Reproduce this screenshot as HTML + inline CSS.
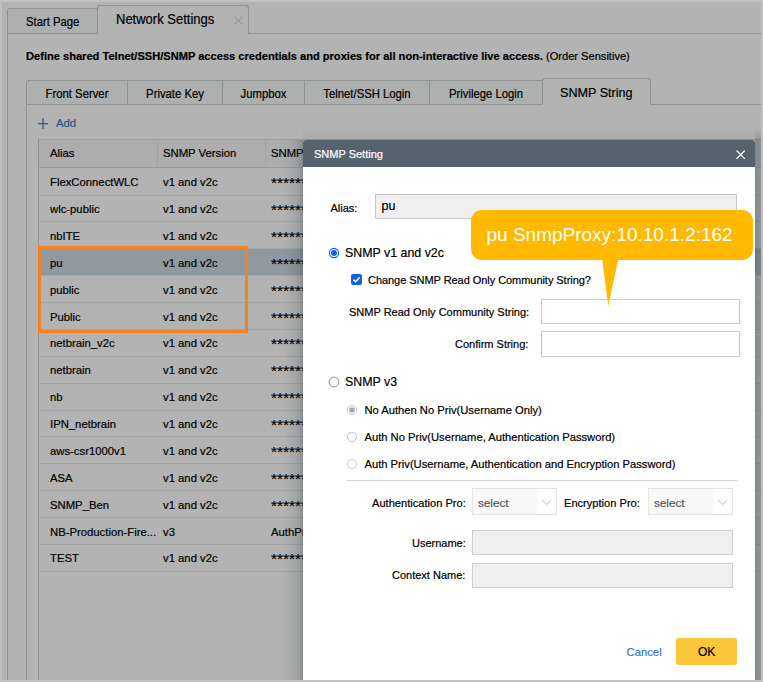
<!DOCTYPE html>
<html><head><meta charset="utf-8">
<style>
*{margin:0;padding:0;box-sizing:border-box}
html,body{width:763px;height:682px;overflow:hidden;background:#c1c1c1;font-family:"Liberation Sans",sans-serif;color:#000}
.a{position:absolute}
.t{position:absolute;white-space:nowrap;line-height:1;-webkit-text-stroke:0.2px currentColor}
.vl{position:absolute;width:1px;background:#8e9092}
.hl{position:absolute;height:1px;background:#8e9092}
</style></head>
<body>
<div class="a" style="left:2px;top:2px;width:759px;height:678px;background:#b3b3b3;overflow:hidden">
<div class="a" style="left:-2px;top:-2px;width:763px;height:682px">
<div class="a" style="left:7px;top:8px;width:91px;height:26px;background:#aeb0b0;border:1px solid #8e9092;border-bottom:none;border-radius:3px 0 0 0"></div>
<div class="t" style="left:26px;top:16.93px;font-size:11.3px;;transform:scaleY(1.12);transform-origin:0 9.57px">Start Page</div>
<div class="a" style="left:97px;top:5px;width:152px;height:29px;background:#b3b3b3;border:1px solid #8e9092;border-bottom:none;border-radius:3px 3px 0 0"></div>
<div class="t" style="left:116px;top:12.60px;font-size:13px;;transform:scaleY(1.08);transform-origin:0 11.00px">Network Settings</div>
<svg class="a" style="left:233px;top:15px" width="11" height="11" viewBox="0 0 11 11"><path d="M1.5 1.5L9.5 9.5M9.5 1.5L1.5 9.5" stroke="#9a9a9a" stroke-width="1.15"/></svg>
<div class="hl" style="left:7px;top:33px;width:91px"></div>
<div class="hl" style="left:248px;top:33px;width:513px"></div>
<div class="vl" style="left:7px;top:33px;height:647px"></div>
<div class="t" style="left:26px;top:50.60px;font-size:11.1px;"><b>Define shared Telnet/SSH/SNMP access credentials and proxies for all non-interactive live access.</b> (Order Sensitive)</div>
<div class="a" style="left:26px;top:80px;width:102px;height:25px;background:#aeb0b0;border:1px solid #8e9092;border-bottom:none;border-radius:3px 0 0 0;"></div>
<div class="t" style="left:26px;width:102px;text-align:center;top:88.93px;font-size:11.3px;transform:scaleY(1.12);transform-origin:0 9.57px">Front Server</div>
<div class="a" style="left:127px;top:80px;width:96px;height:25px;background:#aeb0b0;border:1px solid #8e9092;border-bottom:none;"></div>
<div class="t" style="left:127px;width:96px;text-align:center;top:88.93px;font-size:11.3px;transform:scaleY(1.12);transform-origin:0 9.57px">Private Key</div>
<div class="a" style="left:222px;top:80px;width:83px;height:25px;background:#aeb0b0;border:1px solid #8e9092;border-bottom:none;"></div>
<div class="t" style="left:222px;width:83px;text-align:center;top:88.93px;font-size:11.3px;transform:scaleY(1.12);transform-origin:0 9.57px">Jumpbox</div>
<div class="a" style="left:304px;top:80px;width:126px;height:25px;background:#aeb0b0;border:1px solid #8e9092;border-bottom:none;"></div>
<div class="t" style="left:304px;width:126px;text-align:center;top:88.93px;font-size:11.3px;transform:scaleY(1.12);transform-origin:0 9.57px">Telnet/SSH Login</div>
<div class="a" style="left:429px;top:80px;width:114px;height:25px;background:#aeb0b0;border:1px solid #8e9092;border-bottom:none;"></div>
<div class="t" style="left:429px;width:114px;text-align:center;top:88.93px;font-size:11.3px;transform:scaleY(1.12);transform-origin:0 9.57px">Privilege Login</div>
<div class="a" style="left:542px;top:78px;width:109px;height:27px;background:#b3b3b3;border:1px solid #8e9092;border-bottom:none;border-radius:3px 3px 0 0"></div>
<div class="t" style="left:560px;top:87.33px;font-size:12.6px;;transform:scaleY(1.08);transform-origin:0 10.67px">SNMP String</div>
<div class="hl" style="left:26px;top:104px;width:516px"></div>
<div class="hl" style="left:650px;top:104px;width:111px"></div>
<div class="vl" style="left:26px;top:104px;height:576px"></div>
<svg class="a" style="left:37px;top:117px" width="12" height="13" viewBox="0 0 12 13"><path d="M6 1V12M1 6.5H11" stroke="#25587c" stroke-width="1.25"/></svg>
<div class="t" style="left:56px;top:118.43px;font-size:11.3px;color:#25587c">Add</div>
<div class="a" style="left:38px;top:139px;width:723px;height:29px;background:#adadad;border-top:1px solid #9a9b9c;border-bottom:1px solid #9a9b9c"></div>
<div class="vl" style="left:157px;top:140px;height:27px;background:#a2a3a4"></div>
<div class="vl" style="left:265px;top:140px;height:27px;background:#a2a3a4"></div>
<div class="t" style="left:50px;top:148.43px;font-size:11.3px;">Alias</div>
<div class="t" style="left:163px;top:148.43px;font-size:11.3px;">SNMP Version</div>
<div class="t" style="left:271px;top:148.43px;font-size:11.3px;">SNMP</div>
<div class="a" style="left:39px;top:168px;width:722px;height:27px;"></div>
<div class="hl" style="left:39px;top:195px;width:722px;background:#a3a4a5"></div>
<div class="t" style="left:50px;top:176.53px;font-size:11.3px;">FlexConnectWLC</div>
<div class="t" style="left:163px;top:176.53px;font-size:11.3px;">v1 and v2c</div>
<div class="t" style="left:271px;top:175.26px;font-size:15.4px;">********</div>
<div class="a" style="left:39px;top:196px;width:722px;height:25px;"></div>
<div class="hl" style="left:39px;top:221px;width:722px;background:#a3a4a5"></div>
<div class="t" style="left:50px;top:203.53px;font-size:11.3px;">wlc-public</div>
<div class="t" style="left:163px;top:203.53px;font-size:11.3px;">v1 and v2c</div>
<div class="t" style="left:271px;top:202.26px;font-size:15.4px;">********</div>
<div class="a" style="left:39px;top:222px;width:722px;height:26px;"></div>
<div class="hl" style="left:39px;top:248px;width:722px;background:#a3a4a5"></div>
<div class="t" style="left:50px;top:230.53px;font-size:11.3px;">nbITE</div>
<div class="t" style="left:163px;top:230.53px;font-size:11.3px;">v1 and v2c</div>
<div class="t" style="left:271px;top:229.26px;font-size:15.4px;">********</div>
<div class="a" style="left:39px;top:249px;width:722px;height:26px;background:#8e9a9f;"></div>
<div class="hl" style="left:39px;top:275px;width:722px;background:#a3a4a5"></div>
<div class="t" style="left:50px;top:257.53px;font-size:11.3px;">pu</div>
<div class="t" style="left:163px;top:257.53px;font-size:11.3px;">v1 and v2c</div>
<div class="t" style="left:271px;top:256.26px;font-size:15.4px;">********</div>
<div class="a" style="left:39px;top:276px;width:722px;height:26px;"></div>
<div class="hl" style="left:39px;top:302px;width:722px;background:#a3a4a5"></div>
<div class="t" style="left:50px;top:284.53px;font-size:11.3px;">public</div>
<div class="t" style="left:163px;top:284.53px;font-size:11.3px;">v1 and v2c</div>
<div class="t" style="left:271px;top:283.26px;font-size:15.4px;">********</div>
<div class="a" style="left:39px;top:303px;width:722px;height:26px;"></div>
<div class="hl" style="left:39px;top:329px;width:722px;background:#a3a4a5"></div>
<div class="t" style="left:50px;top:311.53px;font-size:11.3px;">Public</div>
<div class="t" style="left:163px;top:311.53px;font-size:11.3px;">v1 and v2c</div>
<div class="t" style="left:271px;top:310.26px;font-size:15.4px;">********</div>
<div class="a" style="left:39px;top:330px;width:722px;height:26px;"></div>
<div class="hl" style="left:39px;top:356px;width:722px;background:#a3a4a5"></div>
<div class="t" style="left:50px;top:337.53px;font-size:11.3px;">netbrain_v2c</div>
<div class="t" style="left:163px;top:337.53px;font-size:11.3px;">v1 and v2c</div>
<div class="t" style="left:271px;top:336.26px;font-size:15.4px;">********</div>
<div class="a" style="left:39px;top:357px;width:722px;height:26px;"></div>
<div class="hl" style="left:39px;top:383px;width:722px;background:#a3a4a5"></div>
<div class="t" style="left:50px;top:364.53px;font-size:11.3px;">netbrain</div>
<div class="t" style="left:163px;top:364.53px;font-size:11.3px;">v1 and v2c</div>
<div class="t" style="left:271px;top:363.26px;font-size:15.4px;">********</div>
<div class="a" style="left:39px;top:384px;width:722px;height:26px;"></div>
<div class="hl" style="left:39px;top:410px;width:722px;background:#a3a4a5"></div>
<div class="t" style="left:50px;top:391.53px;font-size:11.3px;">nb</div>
<div class="t" style="left:163px;top:391.53px;font-size:11.3px;">v1 and v2c</div>
<div class="t" style="left:271px;top:390.26px;font-size:15.4px;">********</div>
<div class="a" style="left:39px;top:411px;width:722px;height:25px;"></div>
<div class="hl" style="left:39px;top:436px;width:722px;background:#a3a4a5"></div>
<div class="t" style="left:50px;top:418.53px;font-size:11.3px;">IPN_netbrain</div>
<div class="t" style="left:163px;top:418.53px;font-size:11.3px;">v1 and v2c</div>
<div class="t" style="left:271px;top:417.26px;font-size:15.4px;">********</div>
<div class="a" style="left:39px;top:437px;width:722px;height:26px;"></div>
<div class="hl" style="left:39px;top:463px;width:722px;background:#a3a4a5"></div>
<div class="t" style="left:50px;top:445.53px;font-size:11.3px;">aws-csr1000v1</div>
<div class="t" style="left:163px;top:445.53px;font-size:11.3px;">v1 and v2c</div>
<div class="t" style="left:271px;top:444.26px;font-size:15.4px;">********</div>
<div class="a" style="left:39px;top:464px;width:722px;height:26px;"></div>
<div class="hl" style="left:39px;top:490px;width:722px;background:#a3a4a5"></div>
<div class="t" style="left:50px;top:472.53px;font-size:11.3px;">ASA</div>
<div class="t" style="left:163px;top:472.53px;font-size:11.3px;">v1 and v2c</div>
<div class="t" style="left:271px;top:471.26px;font-size:15.4px;">********</div>
<div class="a" style="left:39px;top:491px;width:722px;height:26px;"></div>
<div class="hl" style="left:39px;top:517px;width:722px;background:#a3a4a5"></div>
<div class="t" style="left:50px;top:499.53px;font-size:11.3px;">SNMP_Ben</div>
<div class="t" style="left:163px;top:499.53px;font-size:11.3px;">v1 and v2c</div>
<div class="t" style="left:271px;top:498.26px;font-size:15.4px;">********</div>
<div class="a" style="left:39px;top:518px;width:722px;height:26px;"></div>
<div class="hl" style="left:39px;top:544px;width:722px;background:#a3a4a5"></div>
<div class="t" style="left:50px;top:526.53px;font-size:11.3px;">NB-Production-Fire...</div>
<div class="t" style="left:163px;top:526.53px;font-size:11.3px;">v3</div>
<div class="t" style="left:271px;top:526.53px;font-size:11.3px;">AuthPriv</div>
<div class="a" style="left:39px;top:545px;width:722px;height:26px;"></div>
<div class="hl" style="left:39px;top:571px;width:722px;background:#a3a4a5"></div>
<div class="t" style="left:50px;top:552.53px;font-size:11.3px;">TEST</div>
<div class="t" style="left:163px;top:552.53px;font-size:11.3px;">v1 and v2c</div>
<div class="t" style="left:271px;top:551.26px;font-size:15.4px;">********</div>
<div class="vl" style="left:38px;top:139px;height:541px"></div>
<div class="a" style="left:38px;top:246px;width:210px;height:87px;border:3px solid #f58220"></div>
<div class="a" style="left:278px;top:140px;width:25px;height:542px;background:linear-gradient(to left,rgba(20,35,45,0.33) 0px,rgba(20,35,45,0.235) 1px,rgba(20,35,45,0.18) 3px,rgba(20,35,45,0.12) 6px,rgba(20,35,45,0.087) 9px,rgba(20,35,45,0.06) 12px,rgba(20,35,45,0.04) 14px,rgba(20,35,45,0.012) 19px,rgba(20,35,45,0) 25px)"></div>
<div class="a" style="left:755px;top:140px;width:6px;height:542px;background:linear-gradient(to right,rgba(20,35,45,0.3) 0px,rgba(20,35,45,0.26) 2px,rgba(20,35,45,0.24) 4px,rgba(20,35,45,0.22) 6px)"></div>
<div class="a" style="left:755px;top:128px;width:6px;height:12px;background:linear-gradient(to top,rgba(20,35,45,0.2),rgba(20,35,45,0))"></div>
<div class="a" style="left:303px;top:128px;width:452px;height:12px;background:linear-gradient(to top,rgba(20,35,45,0.2) 0px,rgba(20,35,45,0.06) 1px,rgba(20,35,45,0.04) 4px,rgba(20,35,45,0.015) 8px,rgba(20,35,45,0) 12px)"></div>
<div class="a" style="left:303px;top:140px;width:452px;height:560px;background:#fff;border-radius:3px 3px 0 0;"></div>
<div class="a" style="left:303px;top:140px;width:452px;height:27px;background:#56636e;border-radius:3px 3px 0 0"></div>
<div class="t" style="left:314px;top:148.69px;font-size:11px;color:#fff">SNMP Setting</div>
<svg class="a" style="left:735px;top:148.6px" width="11" height="11" viewBox="0 0 11 11"><path d="M1.5 1.5L9.8 9.8M9.8 1.5L1.5 9.8" stroke="#fff" stroke-width="1.2"/></svg>
<div class="t" style="left:330.5px;top:202.69px;font-size:11px;">Alias:</div>
<div class="a" style="left:375px;top:194px;width:362px;height:25px;background:#efefef;border:1px solid #c9c9c9"></div>
<div class="t" style="left:381.5px;top:200.42px;font-size:12.5px;">pu</div>
<svg class="a" style="left:328px;top:247px" width="12" height="12" viewBox="0 0 12 12"><circle cx="6" cy="6" r="4.6" fill="#fff" stroke="#0f5fe3" stroke-width="1.1"/><circle cx="6" cy="6" r="3" fill="#0f5fe3"/></svg>
<div class="t" style="left:345px;top:246.50px;font-size:12.4px;">SNMP v1 and v2c</div>
<svg class="a" style="left:351px;top:274px" width="11" height="11" viewBox="0 0 11 11"><rect x="0" y="0" width="11" height="11" rx="2" fill="#1263e4"/><path d="M2.5 5.6L4.6 7.7L8.7 3.3" fill="none" stroke="#fff" stroke-width="1.5"/></svg>
<div class="t" style="left:368px;top:274.69px;font-size:11px;letter-spacing:-0.05px">Change SNMP Read Only Community String?</div>
<div class="t" style="left:349px;top:306.69px;font-size:11px;">SNMP Read Only Community String:</div>
<div class="a" style="left:541px;top:299px;width:199px;height:25px;background:#fff;border:1px solid #c9c9c9"></div>
<div class="t" style="left:455px;top:338.69px;font-size:11px;">Confirm String:</div>
<div class="a" style="left:541px;top:331px;width:199px;height:26px;background:#fff;border:1px solid #c9c9c9"></div>
<svg class="a" style="left:328px;top:376px" width="12" height="12" viewBox="0 0 12 12"><circle cx="6" cy="6" r="4.9" fill="#fff" stroke="#85879a" stroke-width="0.95"/></svg>
<div class="t" style="left:345px;top:376.00px;font-size:12.4px;">SNMP v3</div>
<svg class="a" style="left:346px;top:404px" width="12" height="12" viewBox="0 0 12 12"><circle cx="6" cy="6" r="4.6" fill="#fff" stroke="#c4c5cc" stroke-width="1"/><circle cx="6" cy="6" r="2.8" fill="#a6a7b0"/></svg>
<div class="t" style="left:364.5px;top:404.82px;font-size:11.2px;">No Authen No Priv(Username Only)</div>
<svg class="a" style="left:346px;top:431px" width="12" height="12" viewBox="0 0 12 12"><circle cx="6" cy="6" r="4.6" fill="#fff" stroke="#c4c5cc" stroke-width="1"/></svg>
<div class="t" style="left:364.5px;top:431.82px;font-size:11.2px;">Auth No Priv(Username, Authentication Password)</div>
<svg class="a" style="left:346px;top:458px" width="12" height="12" viewBox="0 0 12 12"><circle cx="6" cy="6" r="4.6" fill="#fff" stroke="#c4c5cc" stroke-width="1"/></svg>
<div class="t" style="left:364.5px;top:458.82px;font-size:11.2px;">Auth Priv(Username, Authentication and Encryption Password)</div>
<div class="hl" style="left:346px;top:480px;width:391px;background:#d6d6d6"></div>
<div class="t" style="left:372px;top:498.10px;font-size:11.1px;">Authentication Pro:</div>
<div class="a" style="left:472px;top:488px;width:85px;height:27px;background:#f9f9f9;border:1px solid #e4e4e4"></div>
<div class="a" style="left:537px;top:489px;width:19px;height:25px;background:#fefefe"></div>
<svg class="a" style="left:542px;top:500px" width="9" height="6" viewBox="0 0 9 6"><path d="M0.5 0.8L4.5 4.6L8.5 0.8" fill="none" stroke="#bdbdbd" stroke-width="1"/></svg>
<div class="t" style="left:478px;top:497.10px;font-size:11.7px;color:#575757">select</div>
<div class="a" style="left:648px;top:488px;width:85px;height:27px;background:#f9f9f9;border:1px solid #e4e4e4"></div>
<div class="a" style="left:713px;top:489px;width:19px;height:25px;background:#fefefe"></div>
<svg class="a" style="left:718px;top:500px" width="9" height="6" viewBox="0 0 9 6"><path d="M0.5 0.8L4.5 4.6L8.5 0.8" fill="none" stroke="#bdbdbd" stroke-width="1"/></svg>
<div class="t" style="left:654px;top:497.10px;font-size:11.7px;color:#575757">select</div>
<div class="t" style="left:564px;top:498.10px;font-size:11.1px;">Encryption Pro:</div>
<div class="t" style="left:412px;top:537.69px;font-size:11px;">Username:</div>
<div class="a" style="left:472px;top:530px;width:261px;height:25px;background:#efefef;border:1px solid #cfcfcf"></div>
<div class="t" style="left:392px;top:569.69px;font-size:11px;">Context Name:</div>
<div class="a" style="left:472px;top:563px;width:261px;height:25px;background:#efefef;border:1px solid #cfcfcf"></div>
<div class="t" style="left:626.5px;top:647.03px;font-size:11.3px;color:#3477c6">Cancel</div>
<div class="a" style="left:676px;top:638px;width:61px;height:27px;background:#fcc63c;border-radius:3px"></div>
<div class="t" style="left:698px;top:645.84px;font-size:12px;">OK</div>
<div class="a" style="left:471px;top:210px;width:282px;height:50px;background:#ffba00;border-radius:11px"></div>
<svg class="a" style="left:600px;top:258px" width="20" height="50" viewBox="0 0 20 50"><path d="M2 0L18.6 0L8.2 48Z" fill="#ffba00"/></svg>
<div class="t" style="left:486.5px;top:225.42px;font-size:19px;color:#fff;-webkit-text-stroke:0">pu SnmpProxy:10.10.1.2:162</div>
</div></div>
<div class="a" style="left:0;top:0;width:763px;height:682px;border:2px solid #c1c1c1;pointer-events:none"></div>
</body></html>
